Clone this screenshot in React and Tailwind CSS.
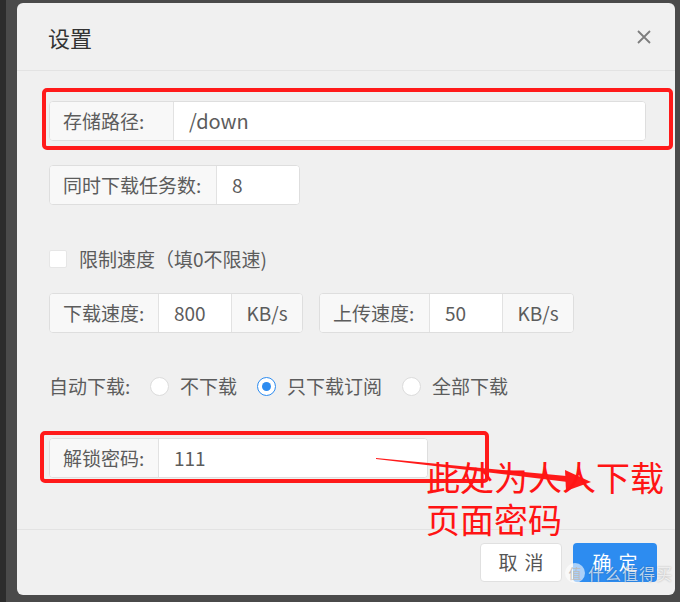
import React, { useState } from "react";

const FONT = "font-['Noto_Sans_CJK_SC','Noto_Sans',sans-serif]";

function Group({ label, value, labelW, inputW, addon, className = "" }) {
  return (
    <div className={`flex h-[40px] rounded-[4px] border border-[#dedede] bg-white overflow-hidden ${className}`}>
      <div
        className="flex items-center pl-[13px] bg-[#f8f8f8] border-r border-[#e2e2e2] text-[19px] text-[#5c5c5c] whitespace-nowrap"
        style={{ width: labelW }}
      >
        {label}
      </div>
      <div
        className="flex items-center pl-[15px] bg-white text-[19px] text-[#5c5c5c] flex-1"
        style={inputW ? { width: inputW, flex: "none" } : undefined}
      >
        {value}
      </div>
      {addon && (
        <div className="flex items-center justify-center w-[71px] bg-[#f8f8f8] border-l border-[#e2e2e2] text-[19px] text-[#5c5c5c]">
          {addon}
        </div>
      )}
    </div>
  );
}

function Radio({ checked, label }) {
  return (
    <div className="flex items-center gap-[11px]">
      <span
        className={`w-[19px] h-[19px] rounded-full bg-white border grid place-items-center ${
          checked ? "border-[#2d8cf0]" : "border-[#dcdcdc]"
        }`}
      >
        {checked && <span className="w-[9px] h-[9px] rounded-full bg-[#2d8cf0]" />}
      </span>
      <span className="text-[19px] text-[#5c5c5c]">{label}</span>
    </div>
  );
}

export default function App() {
  const [limit] = useState(false);

  return (
    <div className={`h-[602px] w-[680px] flex bg-[#4a4a4a] ${FONT}`}>
      <div className="w-[6px] bg-[#2c2c2c]" />
      <div className="ml-[11px] mt-[3px] w-[658px] h-[592px] bg-[#f0f0f0] rounded-md flex flex-col relative overflow-hidden">
        {/* header */}
        <div className="h-[68px] flex items-center justify-between pl-[31px] pr-[24px] border-b border-[#e3e3e3]">
          <span className="text-[22px] text-[#333] mt-[2px]">设置</span>
          <svg width="14" height="14" viewBox="0 0 14 14" className="mt-[1px]">
            <path d="M1 1L13 13M13 1L1 13" stroke="#7d7d7d" strokeWidth="1.8" />
          </svg>
        </div>

        {/* body */}
        <div className="flex-1 flex flex-col pl-[32px] pr-[29px]">
          <Group className="mt-[30px]" label="存储路径:" value={<span className="text-[20px]">/down</span>} labelW={124} />
          <Group className="mt-[24px] w-[251px] h-[39px]" label="同时下载任务数:" value="8" labelW={167} />

          <div className="mt-[45px] flex items-center gap-[12px] h-[18px]">
            <span className="w-[18px] h-[18px] bg-white border border-[#e6e6e6] rounded-[2px]">{limit ? "✓" : null}</span>
            <span className="text-[19px] text-[#5c5c5c]">限制速度（填0不限速)</span>
          </div>

          <div className="mt-[25px] flex gap-[16px]">
            <Group className="h-[38px]" label="下载速度:" value="800" labelW={109} inputW={72} addon="KB/s" />
            <Group className="h-[38px]" label="上传速度:" value="50" labelW={110} inputW={72} addon="KB/s" />
          </div>

          <div className="mt-[38px] flex items-center h-[30px]">
            <span className="text-[19px] text-[#5c5c5c] w-[101px]">自动下载:</span>
            <div className="flex items-center gap-[20px]">
              <Radio label="不下载" />
              <Radio checked label="只下载订阅" />
              <Radio label="全部下载" />
            </div>
          </div>

          <Group className="mt-[37px] w-[379px]" label="解锁密码:" value="111" labelW={109} />
        </div>

        {/* footer */}
        <div className="h-[66px] border-t border-[#e3e3e3] flex justify-end items-start pt-[13px] pr-[18px] gap-[11px]">
          <button className="w-[82px] h-[39px] bg-white border border-[#e0e0e0] rounded-[4px] text-[19px] text-[#555] tracking-[7px] pl-[7px]">
            取消
          </button>
          <button className="w-[84px] h-[39px] bg-[#2d8cf0] rounded-[4px] text-[19px] text-white tracking-[7px] pl-[7px]">
            确定
          </button>
        </div>

        {/* red annotations */}
        <div className="absolute left-[25px] top-[85px] w-[631px] h-[62px] border-[4px] border-[#ff1a1a] rounded-[5px] pointer-events-none" />
        <div className="absolute left-[23px] top-[428px] w-[449px] h-[52px] border-[4px] border-[#ff1a1a] rounded-[5px] pointer-events-none" />
        <svg className="absolute left-0 top-0 pointer-events-none" width="658" height="592">
          <polygon points="359,455 560,474 559,480 359,456" fill="#ff1a1a" />
          <polygon points="548,467 574,479 549,488" fill="#ff1a1a" />
        </svg>
        <div className="absolute left-[409px] top-[453px] text-[34px] leading-[42px] text-[#ff1414] font-['Noto_Sans_CJK_SC',sans-serif]">
          此处为人人下载
          <br />
          页面密码
        </div>

        {/* watermark */}
        <div className="absolute right-[2px] bottom-[10px] flex items-center gap-[3px] text-white/70">
          <span className="w-[20px] h-[20px] rounded-full bg-white/60 text-[#bbb] text-[13px] grid place-items-center">值</span>
          <span className="text-[16px] tracking-[1px] [text-shadow:0_0_2px_rgba(0,0,0,0.3)]">什么值得买</span>
        </div>
      </div>
    </div>
  );
}
